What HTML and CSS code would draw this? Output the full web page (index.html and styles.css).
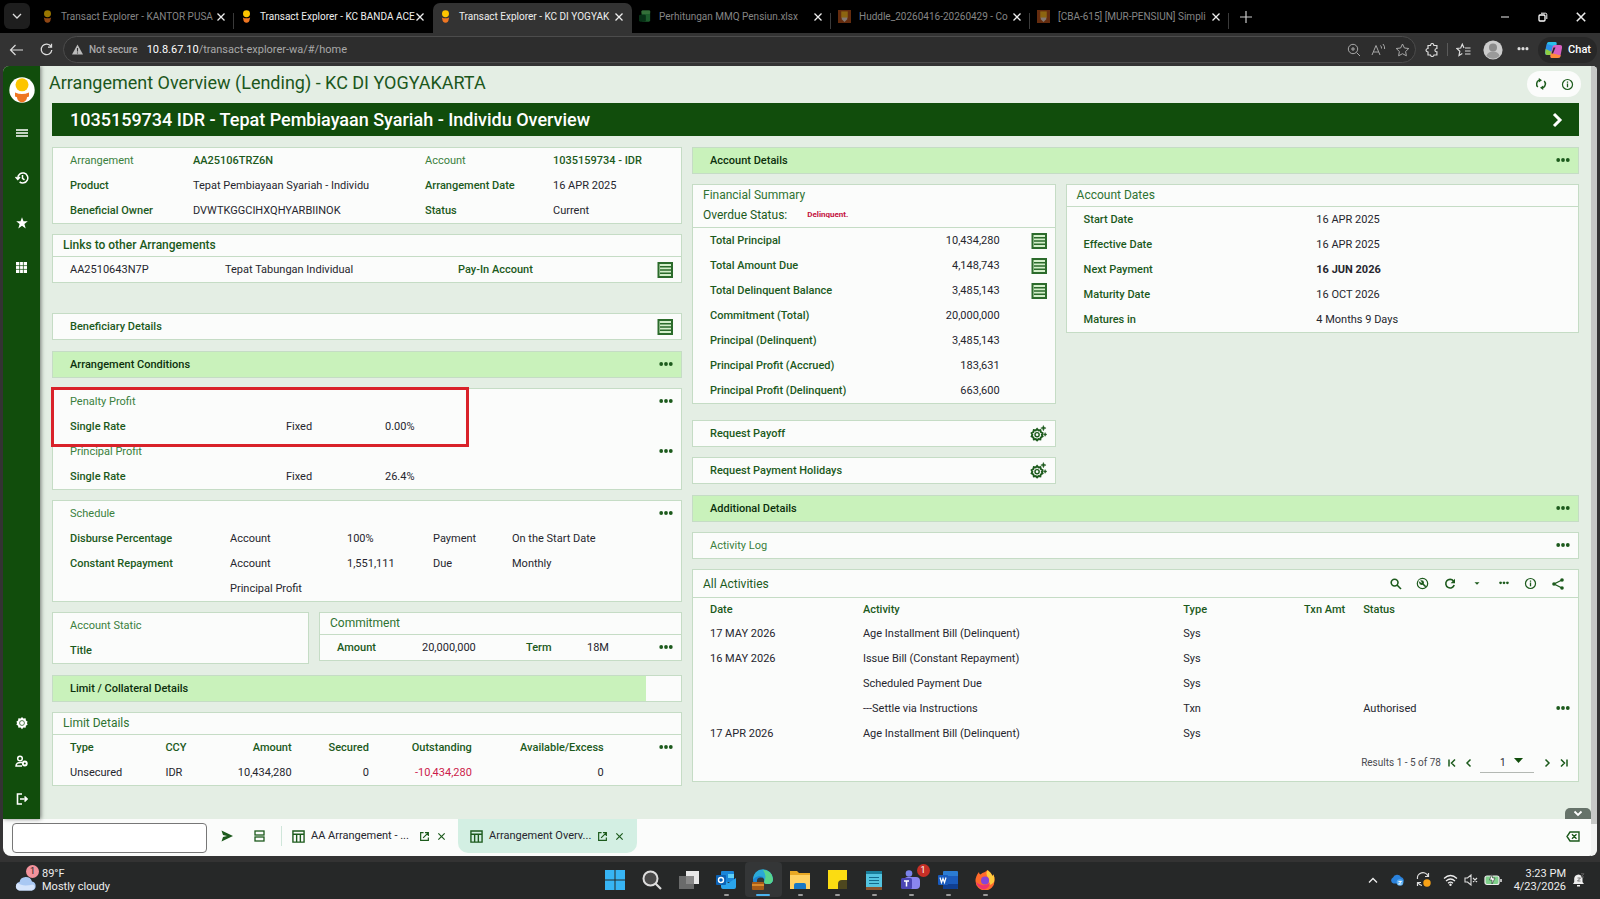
FILE: index.html
```html
<!DOCTYPE html>
<html lang="en">
<head>
<meta charset="utf-8">
<title>Transact Explorer - KC DI YOGYAKARTA</title>
<link rel="stylesheet" href="styles.css">
</head>
<body>
<svg class="defs" aria-hidden="true">
  <symbol id="fav" viewBox="0 0 12 14"><circle cx="6" cy="4" r="3.800" fill="#fdc500"/><path d="M2 8q4 2 8 0l-.6 2.200q0 3-3.400 3.600-3.400-.6-3.400-3.600z" fill="#ef7622"/></symbol>
  <symbol id="jira" viewBox="0 0 14 14"><rect width="14" height="14" fill="#a84a18"/><rect x="3.500" y="1.500" width="7" height="7" fill="#e9a81c"/><path d="M4 8h6v2l-3 3-3-3z" fill="#d9c9be"/></symbol>
  <symbol id="xls" viewBox="0 0 14 14"><rect x="3" y="0" width="10" height="13" rx="1.500" fill="#2f9a4a"/><rect x="3" y="0" width="10" height="4" rx="1" fill="#58b95f"/><rect x="0" y="5" width="8" height="8" rx="1.500" fill="#0d5226"/></symbol>
  <symbol id="x" viewBox="0 0 10 10"><path d="M1.500 1.500l7 7m0-7l-7 7" fill="none" stroke="currentColor" stroke-width="1.300"/></symbol>
  <symbol id="dots" viewBox="0 0 14 6"><g fill="currentColor"><circle cx="2.200" cy="2" r="1.900"/><circle cx="7" cy="2" r="1.900"/><circle cx="11.800" cy="2" r="1.900"/></g></symbol>
  <symbol id="list" viewBox="0 0 16 16"><rect x="1.500" y="1" width="13.500" height="14" fill="#d3efca" stroke="#2b6b2b" stroke-width="2"/><path d="M3 4.700h11M3 8h11M3 11.300h11" stroke="#2b6b2b" stroke-width="1.600"/></symbol>
  <symbol id="gear" viewBox="0 0 16 16"><path d="M8 1l1.600 1.900 2.500-.4.400 2.500L14.500 6.500 13.600 8l.9 1.600-2 1.400-.4 2.500-2.500-.4L8 15l-1.600-1.900-2.500.4-.4-2.500-2-1.400.9-1.600-.9-1.500 2-1.500.4-2.500 2.500.4z" fill="currentColor"/></symbol>
  <symbol id="gearplus" viewBox="0 0 18 18"><path d="M7.500 4.200l1.400 1.500 2.100-.3.400 2 1.900 1.200-.8 1.700.8 1.700-1.900 1.200-.4 2-2.100-.3-1.400 1.500-1.400-1.500-2.100.3-.4-2-1.900-1.200.8-1.700-.8-1.700 1.900-1.200.4-2 2.100.3z" fill="none" stroke="currentColor" stroke-width="2"/><circle cx="7.500" cy="10.300" r="2.200" fill="none" stroke="currentColor" stroke-width="1.500"/><path d="M14.200.5l.8 2 2 .8-2 .8-.8 2-.8-2-2-.8 2-.8zM16 8l.6 1.400 1.400.6-1.400.6-.6 1.400-.6-1.400L14 10l1.400-.6z" fill="currentColor" stroke="currentColor" stroke-width=".5"/></symbol>
  <symbol id="info" viewBox="0 0 14 14"><circle cx="7" cy="7" r="5.400" fill="none" stroke="currentColor" stroke-width="1.300"/><path d="M7 6v4M7 3.800v1.300" stroke="currentColor" stroke-width="1.400"/></symbol>
  <symbol id="open" viewBox="0 0 12 12"><path d="M5 1.800H1.800v8.400h8.400V7M6.500 1.800h3.700v3.700M10 2L4.500 7.500" fill="none" stroke="currentColor" stroke-width="1.300"/></symbol>
  <symbol id="grid" viewBox="0 0 14 14"><path d="M1 1h12v12H1zM1 4.500h12M5 4.500V13M9 4.500V13" fill="none" stroke="currentColor" stroke-width="1.500"/></symbol>
  <symbol id="chev" viewBox="0 0 10 10"><path d="M3.500 1.500L7 5 3.500 8.500" fill="none" stroke="currentColor" stroke-width="1.500"/></symbol>
</svg>

<header class="tabstrip">
  <button class="tab-menu" aria-label="Tab actions"><svg width="12" height="12" viewBox="0 0 12 12"><path d="M2 4l4 4 4-4" fill="none" stroke="#ddd" stroke-width="1.300"/></svg></button>
  <div class="tab dim"><svg width="11" height="13"><use href="#fav"/></svg><span class="tab-title">Transact Explorer - KANTOR PUSA</span><button aria-label="Close tab"><svg width="10" height="10"><use href="#x"/></svg></button></div>
  <div class="tab plain"><svg width="11" height="13"><use href="#fav"/></svg><span class="tab-title">Transact Explorer - KC BANDA ACE</span><button aria-label="Close tab"><svg width="10" height="10"><use href="#x"/></svg></button></div>
  <div class="tab active"><svg width="11" height="13"><use href="#fav"/></svg><span class="tab-title">Transact Explorer - KC DI YOGYAK</span><button aria-label="Close tab"><svg width="10" height="10"><use href="#x"/></svg></button></div>
  <div class="tab dim"><svg width="12" height="13"><use href="#xls"/></svg><span class="tab-title">Perhitungan MMQ Pensiun.xlsx</span><button aria-label="Close tab"><svg width="10" height="10"><use href="#x"/></svg></button></div>
  <div class="tab dim"><svg width="13" height="13"><use href="#jira"/></svg><span class="tab-title">Huddle_20260416-20260429 - Co</span><button aria-label="Close tab"><svg width="10" height="10"><use href="#x"/></svg></button></div>
  <div class="tab dim"><svg width="13" height="13"><use href="#jira"/></svg><span class="tab-title">[CBA-615] [MUR-PENSIUN] Simpli</span><button aria-label="Close tab"><svg width="10" height="10"><use href="#x"/></svg></button></div>
  <button class="win first" aria-label="New tab"><svg width="14" height="14" viewBox="0 0 14 14"><path d="M7 1v12M1 7h12" stroke="#ccc" stroke-width="1.200"/></svg></button>
  <span class="grow"></span>
  <button class="win wide" aria-label="Minimize"><svg width="10" height="10" viewBox="0 0 10 10"><path d="M1 5h8" stroke="#eee"/></svg></button>
  <button class="win wide" aria-label="Restore"><svg width="10" height="10" viewBox="0 0 10 10"><g fill="none" stroke="#fff"><rect x="1" y="3" width="6" height="6" rx="1" stroke-width="1.300"/><path d="M3 1.200h4.500q1.300 0 1.300 1.300V7"/></g></svg></button>
  <button class="win wide" aria-label="Close"><svg width="12" height="12"><use href="#x"/></svg></button>
</header>

<nav class="toolbar">
  <button class="tool" aria-label="Back"><svg width="14" height="12" viewBox="0 0 14 12"><path d="M14 6H1.500M6.500 1l-5 5 5 5" fill="none" stroke="currentColor" stroke-width="1.200"/></svg></button>
  <button class="tool" aria-label="Refresh"><svg width="13" height="14" viewBox="0 0 13 14"><path d="M11 3.500A5.300 5.300 0 1 0 11.800 7M11.500.8v3.400H8" fill="none" stroke="currentColor" stroke-width="1.300"/></svg></button>
  <div class="address">
    <svg width="11" height="11" viewBox="0 0 11 11"><path d="M5.500.5L11 10.500H0z" fill="#bbb"/><path d="M5.500 4v3.500M5.500 8.400v1" stroke="#333" stroke-width="1.100"/></svg>
    <span class="secure">Not secure</span>
    <span class="url"><b>10.8.67.10</b>/transact-explorer-wa/#/home</span>
    <button aria-label="Zoom"><svg width="14" height="14" viewBox="0 0 14 14"><g fill="none" stroke="currentColor"><circle cx="6" cy="6" r="4.700"/><path d="M9.500 9.500L13 13M6 4v4M4 6h4"/></g></svg></button>
    <button aria-label="Read aloud"><svg width="15" height="14" viewBox="0 0 15 14"><path d="M1 12L5 2.500 9 12M2.300 9h5.400M9.500 2.500q1.200 1.300 1 3M12 1q2 2.200 1.600 5" fill="none" stroke="currentColor"/></svg></button>
    <button aria-label="Add to favorites"><svg width="15" height="14" viewBox="0 0 15 14"><path d="M7.500 1l1.900 4 4.400.5-3.200 3 .8 4.300-3.900-2.100-3.900 2.100.8-4.300-3.200-3 4.400-.5z" fill="none" stroke="currentColor"/></svg></button>
  </div>
  <button class="tool ext" aria-label="Extensions"><svg width="14" height="14" viewBox="0 0 14 14"><path d="M3 2.500h2.500q.3-2 1.700-2t1.700 2h3v3q-2 .2-2 1.700t2 1.700v3.100H9q-.3 1.500-1.800 1.500T5.500 12H3V9q-2-.3-2-1.800T3 5.500z" fill="none" stroke="currentColor" stroke-width="1.200"/></svg></button>
  <i class="split"></i>
  <button class="tool" aria-label="Favorites"><svg width="15" height="14" viewBox="0 0 15 14"><path d="M8 5L6.300 1.200 4.700 5 .8 5.500l3 2.800-.8 4.200 3.300-1.900M9 5h5.500M9 8h5.500M9 11h5.500" fill="none" stroke="currentColor" stroke-width="1.200"/></svg></button>
  <button class="tool" aria-label="Profile"><svg width="20" height="20" viewBox="0 0 20 20"><circle cx="10" cy="10" r="9.600" fill="#ccc"/><circle cx="10" cy="7.500" r="4" fill="#8b8b8b"/><path d="M3.500 16q1-4.500 6.500-4.500t6.500 4.500q-6.500 5.500-13 0z" fill="#9a9a9a"/></svg></button>
  <button class="tool" aria-label="More"><svg width="12" height="5" viewBox="0 0 14 6"><use href="#dots"/></svg></button>
  <button class="chat"><svg width="19" height="18" viewBox="0 0 19 18"><path d="M5 1h6q2 0 1.500 2L10.500 12q-.5 2-2.500 2H3q-2.500 0-2-3L2.500 3.500Q3 1 5 1z" fill="#2b8fe8"/><path d="M1.600 8l8.900 4q-.5 2-2.500 2H3Q.5 14 1.600 8z" fill="#8fce43"/><path d="M5 1h6q2 0 1.500 2L12 5.500 3 3Q3.400 1 5 1z" fill="#28c0e8"/><path d="M11 4h5q2.500 0 2 3l-1.500 7.500q-.5 2.500-3 2.500H8q-2 0-1.500-2L8.500 6q.5-2 2.500-2z" fill="#d65fc0"/><path d="M7 12l10 2.500q-.6 2.500-3.500 2.500H8q-2.500 0-1-5z" fill="#ff8a3c"/><path d="M9.500 6.500h2L9 12.500H7.500z" fill="#282828"/></svg>Chat</button>
</nav>

<div class="frame">
  <div class="app">
    <div class="workspace">
      <aside class="side">
        <svg class="logo" width="26" height="26" viewBox="0 0 26 26"><circle cx="13" cy="13" r="12.700" fill="#fff"/><circle cx="13" cy="7.800" r="6.500" fill="#fdc500"/><path d="M6 15.500q7 3 14 0v4l-2 .8q0 4-5 5.200-5-1.200-5-5.200l-2-.8z" fill="#ef7622"/></svg>
        <button aria-label="Menu"><svg width="12" height="10" viewBox="0 0 12 10"><path d="M0 2h12M0 5h12M0 8h12" stroke="#fff" stroke-width="1.500"/></svg></button>
        <button aria-label="History"><svg width="14" height="14" viewBox="0 0 14 14"><path d="M2.800 7a5 5 0 1 1 1.800 3.800M.5 6l2.300 2.500L5 6M7.500 4v3.300l2 1.500" fill="none" stroke="#fff" stroke-width="1.500"/></svg></button>
        <button aria-label="Favourites"><svg width="12" height="12" viewBox="0 0 12 12"><path d="M6 .3l1.500 4h4.300L8.400 6.900l1.300 4.500L6 8.800l-3.700 2.600 1.300-4.500L.2 4.300h4.300z" fill="#fff"/></svg></button>
        <button aria-label="Applications"><svg width="11" height="11" viewBox="0 0 11 11"><path d="M0 0h11v11H0z" fill="#fff"/><path d="M3.600 0v11M7.400 0v11M0 3.600h11M0 7.400h11" stroke="#114d0c" stroke-width=".7"/></svg></button>
        <span class="grow"></span>
        <button class="low" aria-label="Settings"><svg width="14" height="14" viewBox="0 0 16 16"><use href="#gear" color="#fff"/><circle cx="8" cy="8" r="2.800" fill="none" stroke="#114d0c" stroke-width=".8"/></svg></button>
        <button class="low" aria-label="User"><svg width="13" height="12" viewBox="0 0 13 12"><circle cx="5" cy="3.500" r="2.300" fill="none" stroke="#fff" stroke-width="1.500"/><path d="M7 7.500Q1 7 1 11h6" fill="none" stroke="#fff" stroke-width="1.500"/><circle cx="9.800" cy="8.500" r="2.900" fill="#fff"/><circle cx="9.800" cy="8.500" r="1" fill="#114d0c"/></svg></button>
        <button class="low" aria-label="Sign out"><svg width="12" height="12" viewBox="0 0 12 12"><path d="M6 1H1.500v10H6M4 6h7M8.500 3.500L11 6 8.500 8.500" fill="none" stroke="#fff" stroke-width="1.600"/></svg></button>
      </aside>

      <main class="main">
        <div class="titlebar">
          <h1>Arrangement Overview (Lending) - KC DI YOGYAKARTA</h1>
          <div class="pill">
            <button aria-label="Reload"><svg width="12" height="12" viewBox="0 0 12 12"><path d="M2.800 9A4.300 4.300 0 0 1 4 2.200M9.200 3A4.300 4.300 0 0 1 8 9.800" fill="none" stroke="currentColor" stroke-width="1.500"/><path d="M3.800 0L7 2.200 3.800 4.400zM8.200 12L5 9.800l3.200-2.200z" fill="currentColor"/></svg></button>
            <button aria-label="Information"><svg width="13" height="13"><use href="#info"/></svg></button>
          </div>
        </div>
        <div class="banner"><h2>1035159734 IDR - Tepat Pembiayaan Syariah - Individu Overview</h2><button aria-label="Next"><svg width="12" height="16" viewBox="0 0 12 16"><path d="M2 2l6 6-6 6" fill="none" stroke="#fff" stroke-width="3"/></svg></button></div>

        <div class="columns">
          <div class="col">
            <section class="card">
              <div class="row r-arr"><span class="lt">Arrangement</span><span class="lb">AA25106TRZ6N</span><span class="lt">Account</span><span class="lb">1035159734 - IDR</span></div>
              <div class="row r-arr"><span class="lb">Product</span><span>Tepat Pembiayaan Syariah - Individu</span><span class="lb">Arrangement Date</span><span>16 APR 2025</span></div>
              <div class="row r-arr"><span class="lb">Beneficial Owner</span><span>DVWTKGGCIHXQHYARBIINOK</span><span class="lb">Status</span><span>Current</span></div>
            </section>
            <section class="card links">
              <h3 class="head strong">Links to other Arrangements</h3>
              <div class="row r-links"><span>AA2510643N7P</span><span>Tepat Tabungan Individual</span><span class="lb">Pay-In Account</span><button aria-label="View"><svg width="16" height="16"><use href="#list"/></svg></button></div>
            </section>
            <section class="card"><div class="row r-two"><span class="lb">Beneficiary Details</span><button aria-label="View"><svg width="16" height="16"><use href="#list"/></svg></button></div></section>
            <section class="card bar"><div class="row r-two"><h3>Arrangement Conditions</h3><button aria-label="More"><svg width="14" height="6"><use href="#dots"/></svg></button></div></section>
            <section class="card marked">
              <div class="row r-two"><span class="lt">Penalty Profit</span><button aria-label="More"><svg width="14" height="6"><use href="#dots"/></svg></button></div>
              <div class="row r-rate"><span class="lb">Single Rate</span><span>Fixed</span><span>0.00%</span></div>
              <div class="row r-two"><span class="lt">Principal Profit</span><button aria-label="More"><svg width="14" height="6"><use href="#dots"/></svg></button></div>
              <div class="row r-rate"><span class="lb">Single Rate</span><span>Fixed</span><span>26.4%</span></div>
              <div class="mark"></div>
            </section>
            <section class="card">
              <div class="row r-two"><span class="lt">Schedule</span><button aria-label="More"><svg width="14" height="6"><use href="#dots"/></svg></button></div>
              <div class="row r-sch"><span class="lb">Disburse Percentage</span><span>Account</span><span>100%</span><span>Payment</span><span>On the Start Date</span></div>
              <div class="row r-sch"><span class="lb">Constant Repayment</span><span>Account</span><span>1,551,111</span><span>Due</span><span>Monthly</span></div>
              <div class="row r-sch"><span></span><span>Principal Profit</span></div>
            </section>
            <div class="pair pair-static">
              <section class="card"><div class="row r-two"><span class="lt">Account Static</span></div><div class="row r-two"><span class="lb">Title</span></div></section>
              <section class="card"><h3 class="head">Commitment</h3><div class="row r-com"><span class="lb">Amount</span><span>20,000,000</span><span class="lb">Term</span><span>18M</span><button aria-label="More"><svg width="14" height="6"><use href="#dots"/></svg></button></div></section>
            </div>
            <section class="card bar short"><div class="row r-two"><h3>Limit / Collateral Details</h3></div></section>
            <section class="card">
              <h3 class="head">Limit Details</h3>
              <table class="limits">
                <thead><tr><th class="l1">Type</th><th class="l2">CCY</th><th class="l3 num">Amount</th><th class="l4 num">Secured</th><th class="l5 num">Outstanding</th><th class="l6 num">Available/Excess</th><th class="act"><button aria-label="More"><svg width="14" height="6"><use href="#dots"/></svg></button></th></tr></thead>
                <tbody><tr><td>Unsecured</td><td>IDR</td><td class="num">10,434,280</td><td class="num">0</td><td class="num neg">-10,434,280</td><td class="num">0</td><td></td></tr></tbody>
              </table>
            </section>
          </div>

          <div class="col">
            <section class="card bar first"><div class="row r-two"><h3>Account Details</h3><button aria-label="More"><svg width="14" height="6"><use href="#dots"/></svg></button></div></section>
            <div class="pair pair-fin">
              <div class="col">
                <section class="card fin">
                  <div class="head tall"><h3>Financial Summary</h3><p><span>Overdue Status:</span><strong>Delinquent.</strong></p></div>
                  <div class="row r-fin"><span class="lb">Total Principal</span><span class="num">10,434,280</span><button aria-label="View"><svg width="16" height="16"><use href="#list"/></svg></button></div>
                  <div class="row r-fin"><span class="lb">Total Amount Due</span><span class="num">4,148,743</span><button aria-label="View"><svg width="16" height="16"><use href="#list"/></svg></button></div>
                  <div class="row r-fin"><span class="lb">Total Delinquent Balance</span><span class="num">3,485,143</span><button aria-label="View"><svg width="16" height="16"><use href="#list"/></svg></button></div>
                  <div class="row r-fin"><span class="lb">Commitment (Total)</span><span class="num">20,000,000</span></div>
                  <div class="row r-fin"><span class="lb">Principal (Delinquent)</span><span class="num">3,485,143</span></div>
                  <div class="row r-fin"><span class="lb">Principal Profit (Accrued)</span><span class="num">183,631</span></div>
                  <div class="row r-fin"><span class="lb">Principal Profit (Delinquent)</span><span class="num">663,600</span></div>
                </section>
                <section class="card"><div class="row r-two"><span class="lb">Request Payoff</span><button aria-label="Run"><svg width="17" height="17"><use href="#gearplus"/></svg></button></div></section>
                <section class="card"><div class="row r-two"><span class="lb">Request Payment Holidays</span><button aria-label="Run"><svg width="17" height="17"><use href="#gearplus"/></svg></button></div></section>
              </div>
              <section class="card">
                <h3 class="head">Account Dates</h3>
                <div class="row r-date"><span class="lb">Start Date</span><span>16 APR 2025</span></div>
                <div class="row r-date"><span class="lb">Effective Date</span><span>16 APR 2025</span></div>
                <div class="row r-date"><span class="lb">Next Payment</span><strong>16 JUN 2026</strong></div>
                <div class="row r-date"><span class="lb">Maturity Date</span><span>16 OCT 2026</span></div>
                <div class="row r-date"><span class="lb">Matures in</span><span>4 Months 9 Days</span></div>
              </section>
            </div>
            <section class="card bar"><div class="row r-two"><h3>Additional Details</h3><button aria-label="More"><svg width="14" height="6"><use href="#dots"/></svg></button></div></section>
            <section class="card"><div class="row r-two"><span class="lt">Activity Log</span><button aria-label="More"><svg width="14" height="6"><use href="#dots"/></svg></button></div></section>
            <section class="card">
              <div class="head tools"><h3>All Activities</h3>
                <button aria-label="Search"><svg width="12" height="12" viewBox="0 0 12 12"><g fill="none" stroke="currentColor" stroke-width="1.600"><circle cx="4.600" cy="4.600" r="3.400"/><path d="M7 7l4 4"/></g></svg></button>
                <button aria-label="Configure"><svg width="13" height="13" viewBox="0 0 14 14"><circle cx="7" cy="7" r="5.600" fill="none" stroke="currentColor" stroke-width="1.300"/><circle cx="6" cy="6" r="2.600" fill="currentColor"/><path d="M6 6l4.500 4.500" stroke="currentColor" stroke-width="1.700"/><path d="M3 3l3 3" stroke="#fbfcfb" stroke-width="1.200"/></svg></button>
                <button aria-label="Refresh"><svg width="12" height="12" viewBox="0 0 12 12"><path d="M9.500 3A4.300 4.300 0 1 0 10.200 7" fill="none" stroke="currentColor" stroke-width="1.600"/><path d="M11 .8v4.400H6.600z" fill="currentColor"/></svg></button>
                <button aria-label="Refresh options"><svg width="12" height="12" viewBox="0 0 12 12"><path d="M3.500 4.300h5L6 6.800z" fill="currentColor"/></svg></button>
                <button aria-label="More"><svg width="10" height="5" viewBox="0 0 14 6"><use href="#dots"/></svg></button>
                <button aria-label="Information"><svg width="13" height="13"><use href="#info"/></svg></button>
                <button aria-label="Share"><svg width="12" height="12" viewBox="0 0 12 12"><path d="M10 2L2 6l8 4" fill="none" stroke="currentColor" stroke-width="1.300"/><g fill="currentColor"><circle cx="10" cy="2" r="1.800"/><circle cx="2" cy="6" r="1.800"/><circle cx="10" cy="10" r="1.800"/></g></svg></button>
              </div>
              <table class="activities">
                <thead><tr><th class="a1">Date</th><th class="a2">Activity</th><th class="a3">Type</th><th class="a4 num">Txn Amt</th><th class="a5">Status</th><th class="act"></th></tr></thead>
                <tbody>
                  <tr><td>17 MAY 2026</td><td>Age Installment Bill (Delinquent)</td><td>Sys</td><td></td><td></td><td></td></tr>
                  <tr><td>16 MAY 2026</td><td>Issue Bill (Constant Repayment)</td><td>Sys</td><td></td><td></td><td></td></tr>
                  <tr><td></td><td>Scheduled Payment Due</td><td>Sys</td><td></td><td></td><td></td></tr>
                  <tr><td></td><td>---Settle via Instructions</td><td>Txn</td><td></td><td class="a5">Authorised</td><td class="act"><button aria-label="More"><svg width="14" height="6"><use href="#dots"/></svg></button></td></tr>
                  <tr><td>17 APR 2026</td><td>Age Installment Bill (Delinquent)</td><td>Sys</td><td></td><td></td><td></td></tr>
                </tbody>
              </table>
              <div class="pager">
                <span>Results 1 - 5 of 78</span>
                <button aria-label="First page"><svg width="10" height="10" viewBox="0 0 10 10"><path d="M2 1.500v7M8 1.500L4.500 5 8 8.500" fill="none" stroke="currentColor" stroke-width="1.500"/></svg></button>
                <button aria-label="Previous page"><svg width="10" height="10" viewBox="0 0 10 10"><path d="M6.500 1.500L3 5l3.500 3.500" fill="none" stroke="currentColor" stroke-width="1.500"/></svg></button>
                <span class="page"><select aria-label="Page"><option>1</option></select><svg width="9" height="5" viewBox="0 0 9 5"><path d="M0 0h9L4.500 5z" fill="#114d0c"/></svg></span>
                <button aria-label="Next page"><svg width="10" height="10"><use href="#chev"/></svg></button>
                <button aria-label="Last page"><svg width="10" height="10" viewBox="0 0 10 10"><path d="M8 1.500v7M2 1.500L5.500 5 2 8.500" fill="none" stroke="currentColor" stroke-width="1.500"/></svg></button>
              </div>
            </section>
          </div>
        </div>
        <button class="collapse" aria-label="Collapse"><svg width="10" height="7" viewBox="0 0 10 7"><path d="M1.500 1.500L5 5l3.500-3.500" fill="none" stroke="#fff" stroke-width="1.800"/></svg></button>
      </main>
    </div>

    <footer class="dock">
      <input class="command" type="text" aria-label="Command line">
      <button aria-label="Run command"><svg width="12" height="12" viewBox="0 0 12 12"><path d="M.5.5L12 6 .5 11.500 2 7l4-1-4-1z" fill="currentColor"/></svg></button>
      <button aria-label="Layout"><svg width="11" height="12" viewBox="0 0 11 12"><g fill="none" stroke="currentColor" stroke-width="1.300"><rect x="1" y="1" width="9" height="4"/><rect x="1" y="7" width="9" height="4"/></g></svg></button>
      <i class="rule"></i>
      <div class="doc"><svg width="13" height="13"><use href="#grid"/></svg><span class="doc-title">AA Arrangement - ...</span><button aria-label="Pop out"><svg width="11" height="11"><use href="#open"/></svg></button><button aria-label="Close"><svg width="9" height="9" viewBox="0 0 10 10"><use href="#x"/></svg></button></div>
      <div class="doc current"><svg width="13" height="13"><use href="#grid"/></svg><span class="doc-title">Arrangement Overv...</span><button aria-label="Pop out"><svg width="11" height="11"><use href="#open"/></svg></button><button aria-label="Close"><svg width="9" height="9" viewBox="0 0 10 10"><use href="#x"/></svg></button></div>
      <span class="grow"></span>
      <button class="clear" aria-label="Clear"><svg width="14" height="11" viewBox="0 0 14 11"><path d="M4 1h9v9H4L1 5.500zM6 3.300l4.500 4.400m0-4.400L6 7.700" fill="none" stroke="currentColor" stroke-width="1.400"/></svg></button>
    </footer>
  </div>
  <div class="scroll"><i></i></div>
</div>

<footer class="taskbar">
  <div class="weather">
    <span class="cloud"><svg width="22" height="15" viewBox="0 0 22 15"><path d="M5 14.500a4.300 4.300 0 0 1-.5-8.500A6.500 6.500 0 0 1 17 5.500a4.600 4.600 0 0 1 0 9z" fill="#a9c8f3"/><path d="M4 14.500a4 4 0 0 1-1-7.500q4 4 15 1.500 4 2-1 6z" fill="#d5e4fb"/></svg><b>1</b></span>
    <div><p>89°F</p><p>Mostly cloudy</p></div>
  </div>
  <div class="apps">
    <button aria-label="Start"><svg width="20" height="20" viewBox="0 0 20 20"><path d="M0 0h9.500v9.500H0zM10.500 0H20v9.500h-9.500zM0 10.500h9.500V20H0zM10.500 10.500H20V20h-9.500z" fill="#37b4f5"/></svg></button>
    <button aria-label="Search"><svg width="20" height="20" viewBox="0 0 20 20"><circle cx="8.500" cy="8.500" r="7" fill="#4a4a4a" stroke="#ddd" stroke-width="2"/><path d="M13.500 13.500l5.500 5.500" stroke="#ddd" stroke-width="2.200"/></svg></button>
    <button aria-label="Task view"><svg width="20" height="18" viewBox="0 0 20 18"><path d="M7 0h13v13H7z" fill="#e8e8e8"/><path d="M0 5h15v13H0z" fill="#777" opacity=".85"/></svg></button>
    <button class="run" aria-label="Outlook"><svg width="20" height="20" viewBox="0 0 20 20"><rect x="5" y="1" width="13" height="11" rx="1" fill="#1a86d9"/><path d="M5 8l7.500 5L20 8v9q0 2-2 2H7q-2 0-2-2z" fill="#2aa5ec"/><path d="M12 4h6v4h-6z" fill="#5fd0f7"/><rect x="0" y="5" width="10" height="10" rx="1" fill="#0b62b5"/><circle cx="5" cy="10" r="2.500" fill="none" stroke="#fff" stroke-width="1.400"/></svg></button>
    <button class="run on" aria-label="Edge"><svg width="22" height="21" viewBox="0 0 22 21"><path d="M1 12A10 10 0 0 1 21 10q0 5-5.500 5-4.500 0-3-3.500 0-3-4-3T5 13l2 6q-5-1-6-7z" fill="#1c86d6"/><path d="M1 10.500A10 10 0 0 1 21 10q0 5-5.500 5-4.500 0-3-3.500 0-4.500-5.500-4.500-4 .5-6 3.500z" fill="#2ba9d6"/><path d="M11 .7Q20 1.500 21 10q0 5-5.500 5-4.500 0-3-3.500 2.500-4-1.500-10.800z" fill="#58d58c"/><rect x="0" y="13" width="12" height="8" rx="1" fill="#a55b18"/><path d="M0 15h12v2H0z" fill="#d98a2c"/></svg></button>
    <button class="run" aria-label="Files"><svg width="20" height="18" viewBox="0 0 20 18"><path d="M0 0h7l2 2h11v16H0z" fill="#e9a824"/><path d="M0 4h20v14H0z" fill="#ffd162"/><path d="M4 18v-4q0-2 2-2h8q2 0 2 2v4z" fill="#1677c6"/></svg></button>
    <button class="run" aria-label="Sticky Notes"><svg width="19" height="19" viewBox="0 0 19 19"><path d="M0 0h19v11l-8 8H0z" fill="#fbdc12"/><path d="M19 10v9h-9v-5q0-4 4-4z" fill="#4d471f"/></svg></button>
    <button class="run" aria-label="Notepad"><svg width="16" height="20" viewBox="0 0 16 20"><rect x="0" y="1" width="16" height="18" rx="1" fill="#54c4e0"/><path d="M0 17h16v3H0z" fill="#8a5430"/><path d="M0 1h16v3H0z" fill="#1a7f9b"/><path d="M3 7.500h10M3 10.500h10M3 13.500h10" stroke="#136a8c" stroke-width="1.200"/></svg></button>
    <button class="run teams" aria-label="Teams"><svg width="20" height="20" viewBox="0 0 20 20"><circle cx="8" cy="3.500" r="3.300" fill="#7b83eb"/><rect x="3" y="7" width="16" height="12" rx="4" fill="#8a86f0"/><rect x="0" y="8" width="11" height="11" rx="1.500" fill="#4b46b5"/><path d="M3 11h5M5.500 11v5.500" stroke="#fff" stroke-width="1.500"/></svg><b>1</b></button>
    <button class="run" aria-label="Word"><svg width="20" height="18" viewBox="0 0 20 18"><rect x="5" width="15" height="18" rx="1" fill="#2b7cd3"/><path d="M5 5h15v8H5z" fill="#1b5cbd"/><path d="M5 13h15v4q0 1-1 1H5z" fill="#103f91"/><rect y="4" width="10" height="10" rx="1" fill="#185abd"/><path d="M2 6.500l1.500 5L5 7.500l1.500 4L8 6.500" fill="none" stroke="#fff" stroke-width="1.200"/></svg></button>
    <button class="run" aria-label="Firefox"><svg width="20" height="20" viewBox="0 0 20 20"><path d="M10 2q3-2 2.500-2 4 3 5 6 1-1 .5-2Q20 7 19.500 11a9.500 9.500 0 0 1-19 0Q.5 6 4 2q0 2 1.500 2.500Q7 2.500 10 2z" fill="#ff6a2b"/><path d="M12.500 0q4 3 5 6 1-1 .5-2Q20 7 19 12q-3 4-6 3 3-5-1-9-1.500-3 .5-6z" fill="#ffcb3c"/><circle cx="10" cy="10.500" r="4" fill="#8544d8"/><path d="M1 12q4 4 9 3 4-.5 5-3 0 6-6 7.500-6-1-8-7.500z" fill="#f0336d"/></svg></button>
  </div>
  <div class="tray">
    <svg class="far" width="10" height="8" viewBox="0 0 10 8"><path d="M1 6.500l4-4 4 4" fill="none" stroke="#eee" stroke-width="1.300"/></svg>
    <svg class="far" width="14" height="12" viewBox="0 0 14 12"><path d="M3.500 9.500A3.200 3.200 0 0 1 3 3.500a4.500 4.500 0 0 1 8-.5 3.500 3.500 0 0 1 1 6.500z" fill="#2a82dc"/><circle cx="10" cy="8.500" r="3.300" fill="#5bb0f5"/><path d="M8.500 7.500h3l-3 2.500h3" fill="none" stroke="#fff" stroke-width=".9"/></svg>
    <svg class="far" width="15" height="15" viewBox="0 0 15 15"><path d="M1.500 7A5.500 5.500 0 0 1 12 4M12.500 1v3.500H9M6 13.500A5.500 5.500 0 0 1 2 10.500M1.500 14v-3.500H5" fill="none" stroke="#ddd" stroke-width="1.200"/><circle cx="11" cy="11" r="3.700" fill="#f7a116"/></svg>
    <svg width="15" height="12" viewBox="0 0 15 12"><path d="M1 4.500q6.500-6 13 0M3 7q4.500-4 9 0M5 9.300q2.500-2.300 5 0" fill="none" stroke="#eee" stroke-width="1.200"/><circle cx="7.500" cy="10.700" r="1.200" fill="#eee"/></svg>
    <svg width="14" height="12" viewBox="0 0 14 12"><path d="M1 4h2.500L7 1v10L3.500 8H1zM9 4l4 4m0-4L9 8" fill="none" stroke="#ddd" stroke-width="1.100"/></svg>
    <svg width="18" height="12" viewBox="0 0 18 12"><rect x="1" y="2" width="14" height="8.500" rx="2" fill="#7fd08b" stroke="#eee" stroke-width="1.200"/><path d="M17 5v3" stroke="#eee" stroke-width="1.500"/><path d="M8 0L5.500 6H8v4l3-6H8.500z" fill="#fff" stroke="#262828" stroke-width=".6"/></svg>
    <div class="clock"><p>3:23 PM</p><p>4/23/2026</p></div>
    <svg width="13" height="14" viewBox="0 0 13 14"><path d="M1 11l1.200-2V5.500Q2.500 2 6.500 1.500 10 2 10.500 5v4l1.500 2z" fill="#eee"/><path d="M5 12h3v1.500H5z" fill="#eee"/><path d="M9 .8h3L9 4h3M5.500 5h3l-3 3h3" fill="none" stroke="#666" stroke-width=".9"/></svg>
  </div>
</footer>
</body>
</html>
```
FILE: styles.css
```css
* { box-sizing: border-box; }
body {
  margin: 0;
  min-height: 100vh;
  display: flex;
  flex-direction: column;
  background: #333;
  color: #26262e;
  font: 11px/14px Roboto, "Liberation Sans", sans-serif;
}
h1, h2, h3, p { margin: 0; font: inherit; }
svg { display: block; flex: none; }
button {
  display: flex;
  align-items: center;
  justify-content: center;
  flex: none;
  padding: 0;
  border: 0;
  background: none;
  color: inherit;
  font: inherit;
}
.defs { position: absolute; width: 0; height: 0; }
.grow { flex: 1; }

/* browser chrome */
.tabstrip { display: flex; align-items: stretch; height: 33px; background: #000; color: #eee; font-size: 10px; }
.tab-menu { width: 26px; height: 26px; margin: 3px 5px 3px 4px; border-radius: 6px; background: #1e1e1e; }
.tab {
  flex: 0 1 199px;
  min-width: 0;
  display: flex;
  align-items: center;
  margin-top: 3px;
  padding: 0 8px 3px 7px;
  background: linear-gradient(#3a3a3a, #3a3a3a) right 10px / 1px 16px no-repeat;
}
.tab > svg { margin-right: 8px; }
.tab.plain { background: none; }
.tab.active { background: #333; border-radius: 7px 7px 0 0; }
.tab-title { flex: 1; white-space: nowrap; }
.dim .tab-title { color: #858585; }
.dim > svg { opacity: .6; }
.win { width: 28px; }
.win.first { margin-left: 3px; }
.win.wide { width: 38px; }

.toolbar { display: flex; align-items: center; height: 33px; padding: 0 3px 0 1px; background: #333; color: #ddd; }
.tool { width: 30px; height: 28px; }
.tool.ext { margin-left: 1px; }
.toolbar > .tool:nth-child(2) { margin-right: 2px; }
.split { width: 1px; height: 13px; background: #5a5a5a; }
.address {
  flex: 1;
  display: flex;
  align-items: center;
  height: 27px;
  padding: 0 1px 0 8px;
  border: 1px solid #4c4c4c;
  border-radius: 14px;
  background: #2d2d2d;
  color: #a8a8a8;
}
.address button { width: 24px; }
.secure { margin: 0 9px 0 6px; font-weight: 500; font-size: 10px; }
.url { flex: 1; font-size: 11px; }
.url b { color: #fff; font-weight: 400; }
.chat { gap: 5px; height: 26px; padding: 0 6px; border-radius: 13px; background: #282828; color: #fff; font-weight: 500; }

/* application */
.frame { position: relative; flex: 1; display: flex; margin: 0 3px; }
.app { flex: 1; min-width: 0; display: flex; flex-direction: column; border-radius: 6px 6px 8px 8px; overflow: hidden; background: #fbfcfb; }
.workspace { flex: 1; display: flex; }
.side {
  z-index: 1;
  width: 37px;
  display: flex;
  flex-direction: column;
  align-items: center;
  padding: 11px 0 1px;
  background: #114d0c;
  box-shadow: 1px 0 4px #00000080;
}
.side .logo { margin-bottom: 7px; }
.side button { width: 37px; height: 45px; }
.side button.low { height: 38px; }

.main { position: relative; flex: 1; min-width: 0; padding: 0 18px 20px 12px; background: #e4eee4; color: #26262e; }
.titlebar { display: flex; align-items: center; justify-content: space-between; height: 37px; }
.titlebar h1 { margin: 0 0 3px -3px; color: #1c571c; font-size: 18px; line-height: 20px; }
.pill { display: flex; height: 26px; margin: 5px -2px 6px 0; border-radius: 13px; background: #fbfcfb; color: #1d5c1d; }
.pill button { width: 27px; }
.banner { display: flex; align-items: center; justify-content: space-between; height: 33px; padding: 0 15px 0 18px; background: #114d0c; color: #fff; }
.banner h2 { font-size: 18px; line-height: 20px; font-weight: 500; }

.columns { display: grid; grid-template-columns: 630fr 887fr; gap: 10px; padding-top: 11px; align-items: start; }
.col { display: flex; flex-direction: column; gap: 10px; min-width: 0; }
.pair { display: grid; gap: 10px; align-items: start; }
.pair-static { grid-template-columns: 257fr 363fr; }
.pair-fin { grid-template-columns: 364fr 514fr; }
.card { border: 1px solid #c5dcc5; background: #fbfcfb; }
.links { margin-bottom: 20px; }
.fin { margin-bottom: 6px; }
.bar { margin-top: 1px; background: #c9f2bb; color: #0c300c; font-weight: 500; }
.bar.first { margin-top: 0; }
.bar.short { background: linear-gradient(90deg, #c9f2bb 94.500%, #fbfcfb 94.500%); }
.head { height: 22px; padding-left: 10px; border-bottom: 1px solid #c5dcc5; color: #2f7332; font-size: 12px; line-height: 20px; }
.head.strong { color: #1c5a1c; font-weight: 500; }
.head.tall { height: 43px; }
.head.tall p { display: flex; align-items: center; gap: 20px; color: #1c5a1c; }
.head.tall strong { color: #c4123f; font-size: 8px; }
.head.tools { display: flex; align-items: center; height: 28px; padding-right: 7px; }
.head.tools h3 { flex: 1; color: #1c5a1c; }
.head.tools button { width: 27px; }

.row { display: grid; align-items: center; height: 25px; padding: 0 8px 0 17px; white-space: nowrap; }
.row button, .act button, .tools, .pager { color: #1c5a1c; }
.row button { justify-self: end; }
.lb, th { color: #1c5a1c; font-weight: 500; }
.lt { color: #3a803d; }
.num { text-align: right; }
.r-two { grid-template-columns: 1fr auto; }
.r-arr { grid-template-columns: 123fr 232fr 128fr 120fr; }
.r-links { grid-template-columns: 155fr 233fr 199fr auto; }
.r-rate { grid-template-columns: 216fr 99fr 288fr; }
.r-sch { grid-template-columns: 160fr 117fr 86fr 79fr 161fr; }
.r-com { grid-template-columns: 85fr 104fr 61fr 72fr 14px; }
.r-fin { grid-template-columns: 160fr 130fr 47fr; }
.r-date { grid-template-columns: 233fr 254fr; }

.marked { position: relative; }
.mark { position: absolute; left: -2px; top: -2px; width: 66.500%; height: 60px; border: 3px solid #d9222a; }

table { width: 100%; border-collapse: collapse; table-layout: fixed; }
th, td { height: 25px; padding: 0; text-align: left; white-space: nowrap; }
th:first-child, td:first-child { padding-left: 17px; }
th.num, td.num { text-align: right; }
.activities th { height: 23px; }
.act { padding-right: 8px; }
.act button { margin-left: auto; }
.neg { color: #cc1c4b; }
.l1 { width: 17.900%; }
.l2 { width: 8%; }
.l3 { width: 12.100%; }
.l4 { width: 12.300%; }
.l5 { width: 16.400%; }
.l6 { width: 21%; }
.a1 { width: 19.200%; }
.a2 { width: 36.200%; }
.a3 { width: 9%; }
.a4 { width: 9.300%; }
.a5 { width: 20%; padding-left: 18px; }

.pager { display: flex; align-items: center; justify-content: flex-end; height: 35px; padding: 0 6px 1px 0; font-size: 10px; }
.pager > span:first-child { margin-right: 2px; color: #4a4a50; }
.pager button { width: 17px; }
.page { position: relative; display: flex; width: 54px; height: 20px; margin: 0 4px 0 3px; border-bottom: 1px solid #b3b8b3; }
.page select { flex: 1; padding: 0 0 0 20px; border: 0; background: none; appearance: none; font: inherit; color: #26262e; }
.page svg { position: absolute; right: 11px; top: 5px; }
.collapse { position: absolute; right: 6px; bottom: 0; width: 26px; height: 11px; border-radius: 5px 5px 0 0; background: #66736a; }

.dock { display: flex; align-items: stretch; height: 37px; padding: 0 0 3px 9px; color: #1c5a1c; }
.command { width: 195px; height: 30px; margin: 4px 4px 0 0; border: 1px solid #777; border-radius: 4px; background: #fff; }
.dock > button { width: 32px; }
.rule { width: 1px; margin: 7px 10px 7px 6px; background: #cfe6da; }
.doc { display: flex; align-items: center; width: 155px; gap: 6px; margin-right: 11px; color: #1c5a1c; }
.doc-title { flex: 1; color: #26262e; white-space: nowrap; }
.doc button { width: 11px; }
.doc.current { width: 179px; padding: 0 12px; border-radius: 0 0 10px 10px; background: #d3efe3; }
.dock .clear { width: 48px; }
.scroll { position: absolute; top: 0; right: 0; bottom: 0; width: 6px; background: #f3f4f3; border-radius: 0 6px 8px 0; overflow: hidden; }
.scroll i { display: block; height: 96%; background: #c6c8c6; }

/* desktop taskbar */
.taskbar { display: grid; grid-template-columns: 1fr auto 1fr; align-items: center; height: 37px; margin-top: 6px; padding-bottom: 2px; background: #262828; color: #eee; line-height: 13px; }
.weather { display: flex; align-items: center; gap: 5px; padding-left: 15px; }
.cloud { position: relative; padding-top: 8px; }
.cloud b, .teams b { position: absolute; display: block; width: 13px; height: 13px; border-radius: 50%; font-size: 9px; font-weight: 400; text-align: center; }
.cloud b { right: -2px; top: -3px; background: #f4929c; color: #222; }
.teams b { right: 0; top: 2px; background: #c62f26; color: #fff; }
.apps { display: flex; }
.apps button { position: relative; width: 37px; height: 35px; }
.apps .run::after { content: ""; position: absolute; bottom: 1px; width: 5px; height: 2px; border-radius: 1px; background: #9a9a9a; }
.apps .on { background: #343637; border-radius: 4px; }
.apps .run.on::after { width: 14px; background: #4cb3ef; }
.tray { display: flex; align-items: center; justify-content: flex-end; gap: 6px; padding-right: 15px; }
.tray .far { margin-right: 6px; }
.clock { margin-left: 6px; text-align: right; }
```
